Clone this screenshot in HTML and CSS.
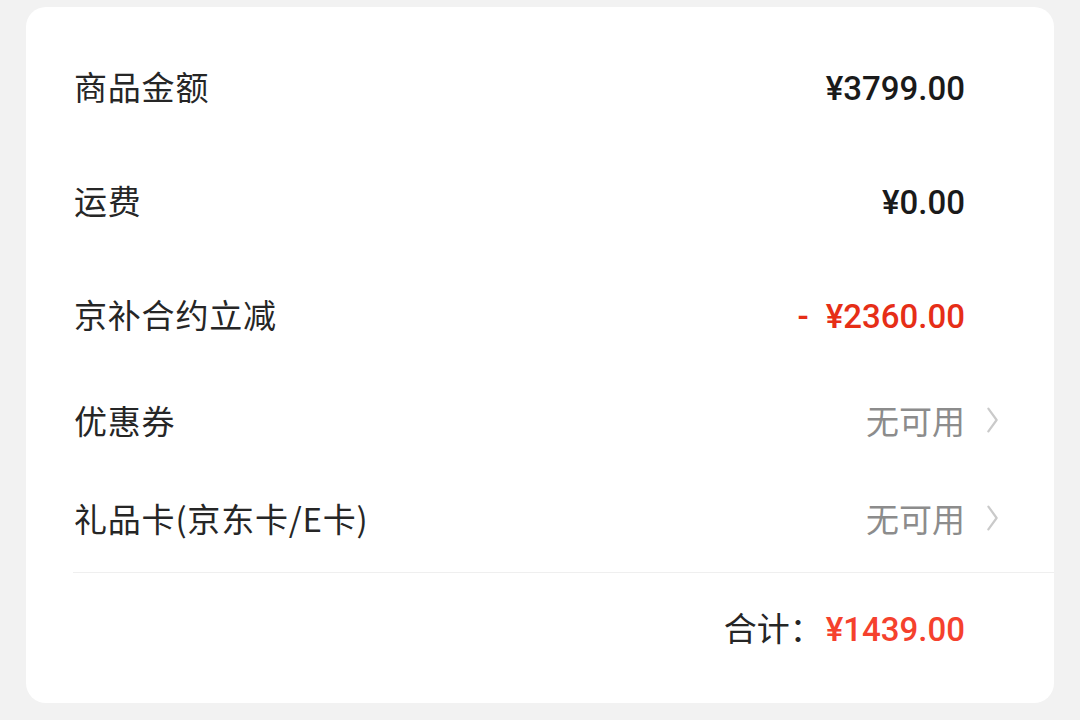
FILE: index.html
```html
<!DOCTYPE html>
<html lang="zh-CN">
<head>
<meta charset="utf-8">
<link rel="stylesheet" href="styles.css">
</head>
<body>
<div class="card">
  <div class="row">
    <span class="label">商品金额</span>
    <span class="value">¥3799.00</span>
    <span class="trail"></span>
  </div>
  <div class="row">
    <span class="label">运费</span>
    <span class="value">¥0.00</span>
    <span class="trail"></span>
  </div>
  <div class="row">
    <span class="label">京补合约立减</span>
    <span class="value red"><span class="minus">-</span>¥2360.00</span>
    <span class="trail"></span>
  </div>
  <div class="row row-sm">
    <span class="label">优惠券</span>
    <span class="muted">无可用</span>
    <span class="trail"><svg class="chev" width="12" height="28" viewBox="0 0 12 28"><polyline points="1.5,1.5 10.5,14 1.5,26.5" fill="none" stroke="#cacaca" stroke-width="2.4" stroke-linecap="round" stroke-linejoin="round"/></svg></span>
  </div>
  <div class="row row-sm">
    <span class="label">礼品卡(京东卡/E卡)</span>
    <span class="muted">无可用</span>
    <span class="trail"><svg class="chev" width="12" height="28" viewBox="0 0 12 28"><polyline points="1.5,1.5 10.5,14 1.5,26.5" fill="none" stroke="#cacaca" stroke-width="2.4" stroke-linecap="round" stroke-linejoin="round"/></svg></span>
  </div>
  <div class="divider"></div>
  <div class="total">
    <span class="total-label">合计：</span>
    <span class="value total-red">¥1439.00</span>
    <span class="trail"></span>
  </div>
</div>
</body>
</html>
```

FILE: styles.css
```css
* { box-sizing: border-box; }
html, body {
  margin: 0;
  padding: 0;
  background: #f2f2f2;
}
body {
  padding: 7px 26px 0 26px;
  font-family: "Noto Sans CJK SC", "Noto Sans", sans-serif;
}
.card {
  width: 1028px;
  height: 696px;
  background: #ffffff;
  border-radius: 20px;
  padding-top: 22px;
}
.row {
  height: 114px;
  display: flex;
  align-items: center;
  padding-left: 48px;
  padding-right: 56px;
}
.row-sm {
  height: 98px;
}
.label {
  flex: 1;
  font-size: 33px;
  color: #262626;
  line-height: 1;
  letter-spacing: 0.8px;
}
.value {
  font-family: "Roboto", "Liberation Sans", sans-serif;
  font-weight: 500;
  font-size: 33px;
  color: #1a1a1a;
  line-height: 1;
  padding-top: 5px;
}
.minus {
  margin-right: 15px;
  letter-spacing: 2px;
}
.red { color: #e62e17; }
.total-red { color: #f5412d; }
.muted {
  font-size: 33px;
  color: #8c8c8c;
  line-height: 1;
}
.trail {
  width: 33px;
  display: flex;
  align-items: center;
  padding-left: 22px;
}
.chev { display: block; }
.divider {
  height: 1px;
  background: #efefef;
  margin: 5px 0 0 47px;
}
.total {
  height: 108px;
  display: flex;
  align-items: center;
  justify-content: flex-end;
  padding-right: 56px;
}
.total-label {
  font-size: 33px;
  color: #262626;
  line-height: 1;
  margin-right: 3px;
}
```
